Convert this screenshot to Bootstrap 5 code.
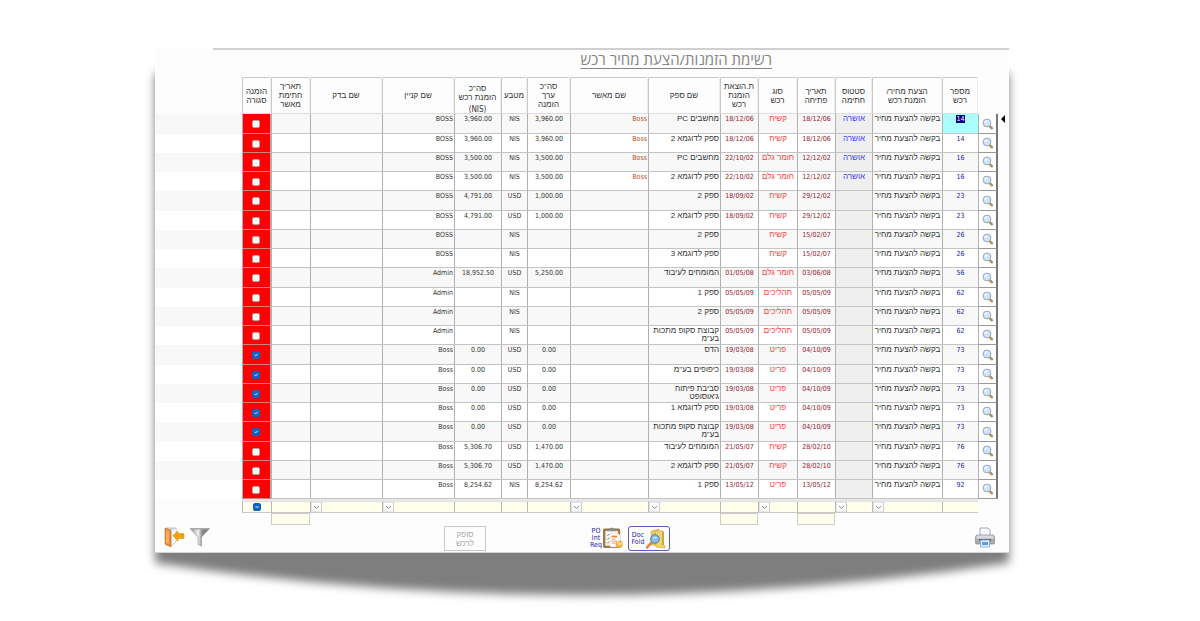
<!DOCTYPE html>
<html lang="he">
<head>
<meta charset="utf-8">
<meta name="viewport" content="width=device-width, initial-scale=1">
<title>רשימת הזמנות/הצעת מחיר רכש</title>
<link href="https://cdn.jsdelivr.net/npm/bootstrap@5.3.0/dist/css/bootstrap.min.css" rel="stylesheet">
<style>
body{background:#fff;font-family:"Liberation Sans",sans-serif;font-size:8px;line-height:8px;color:#333}
.sheet-wrap{padding:48px 191px 68px 155px;z-index:0}
.sheet{background:#fdfdfd;border-bottom:1px solid #d4d4d4}
.topline{height:2px;background:#d0d0d0;margin-left:58px}
.shade{top:61px;left:135px;width:calc(100% - 306px);height:560px;z-index:-1}
.titlebar{height:27px;padding-right:237px}
.title{font-family:"Open Sans",sans-serif;font-size:15px;line-height:18px;color:#858585;text-decoration:underline;text-decoration-thickness:1px;text-underline-offset:3px}
.latin{font-family:"DejaVu Sans Condensed","DejaVu Sans",sans-serif;font-size:7px}
.orders{table-layout:fixed;width:100%;border-collapse:separate;border-spacing:0}
.orders th{height:37px;padding:0;font-weight:400;text-align:center;vertical-align:middle;line-height:9px;border:1px solid #c8c8c8;border-right-color:#eee;border-bottom-color:#ddd;border-radius:2px 2px 0 0}
.orders th.sum{vertical-align:bottom}
.sum span{display:block;font-size:8px;line-height:11px;padding-top:2px;height:11px}
.orders th.void,.orders td.void{border:0 !important}
.orders tbody td{height:19px;padding:1px 1px 0;vertical-align:top;text-align:center;border-left:1px solid #b0b0b0;border-bottom:1px solid #c4c4c4}
.orders tbody tr:nth-child(4n+1) td{height:20px}
.orders tbody tr:nth-child(odd){background:#f8f8f8}
.orders tbody tr:nth-child(even){background:#fff}
.orders tbody td.edge{background:#fdfdfd;text-align:right;padding-right:4px}
.orders tbody td.name{text-align:right}
.orders tbody td.status{background:#efefef;color:#3b3bff}
.orders tbody td.kind{color:#ff3b3b}
.orders tbody td.date{color:#8f1a2c}
.orders tbody td.num{color:#1c1c98}
.orders tbody tr.current td.num{background:#aff}
.current .num span{background:#000080;color:#fff}
.orders tbody td.approver{color:#b0501f;text-align:right}
.orders tbody td.buyer{text-align:right}
.orders tbody td.closed{background:#f00;border-right:1px solid #b0b0b0;border-bottom-color:#d08080;vertical-align:middle;padding-right:2px}
.orders tbody td.lens{background:#fff;border-right:2px solid #777;border-bottom-color:#999;padding:0;vertical-align:middle}
.lens button{width:16px;height:14px}
.tick{width:8px;height:8px;min-height:0;border:1px solid #b4a4a4;border-radius:2px;background-color:#f6f6f6}
.form-check-input.tick:checked,.form-check-input.tick:indeterminate{background-color:#0b64c0;border-color:#0b64c0}
.orders tfoot td{height:12px;padding:0;border-left:1px solid #b8b8b8;border-bottom:1px solid #c8c8c8;border-top:1px solid #e0e0e0;background:#ffffec}
.orders tfoot .spacer td{height:2px;border:0;background:#e8e8e8}
.orders tfoot .spacer td.void,.orders tfoot td.void{background:transparent}
.orders tfoot .second td.box{border:1px solid #ccc}
.filter{display:block;width:100%;height:10px;border:0;border-radius:0;background-color:transparent;padding:0;appearance:none;font-size:8px;line-height:8px}
select.filter{background:url("data:image/svg+xml,%3Csvg xmlns='http://www.w3.org/2000/svg' width='11' height='10'%3E%3Cpath d='M0 0h10.500v10H0z' fill='%23fff' stroke='%23ccc'/%3E%3Cpath d='M3 4l2.500 2.500L8 4' fill='none' stroke='%23888'/%3E%3C/svg%3E") left center no-repeat}
.tools{height:27px;padding:1px 14px 0 9px}
.tool{border:0;background:none;padding:0}
.supplied{width:42px;height:25px;margin-left:233px;border:1px solid #c8c8c8;color:#a8a8a8;font-size:8px;line-height:9px}
.po{margin-left:104px;gap:1px}
.po,.doc{color:#1c1c98}
.latin.po,.latin.doc{line-height:7px;text-align:center}
.doc{width:42px;height:25px;margin-left:4px;gap:2px;border:1px solid #5a5ab8;border-radius:3px}
</style>
</head>
<body>
<div class="sheet-wrap position-relative">
<svg class="shade position-absolute" viewBox="0 0 894 560" preserveAspectRatio="none" aria-hidden="true"><defs><filter id="soft" filterUnits="userSpaceOnUse" x="0" y="0" width="894" height="560"><feGaussianBlur stdDeviation="5"/></filter></defs><path d="M20 12H874V502Q447 566 20 502Z" fill="#7e7e7e" filter="url(#soft)"/></svg>
<main class="sheet">
<div class="topline"></div>
<div class="titlebar text-end"><h1 class="title m-0" dir="rtl">רשימת הזמנות/הצעת מחיר רכש</h1></div>
<table class="orders" dir="rtl">
<colgroup id="cols"></colgroup>
<thead><tr>
<th class="void"></th><th class="void"></th><th>מספר<br>רכש</th><th>הצעת מחיר/<br>הזמנת רכש</th><th>סטטוס<br>חתימה</th><th>תאריך<br>פתיחה</th><th>סוג<br>רכש</th><th>ת.הוצאת<br>הזמנת<br>רכש</th><th>שם ספק</th><th>שם מאשר</th><th>סה"כ<br>ערך<br>הזמנה</th><th>מטבע</th><th class="sum">סה"כ<br>הזמנת רכש<span class="latin">(NIS)</span></th><th>שם קניין</th><th>שם בדק</th><th>תאריך<br>חתימת<br>מאשר</th><th>הזמנה<br>סגורה</th><th class="void"></th>
</tr></thead>
<tbody id="rows"></tbody>
<tfoot id="filters"></tfoot>
</table>
<div class="tools d-flex align-items-start">
<button class="tool" aria-label="יציאה"><svg width="21" height="22" viewBox="0 0 21 22"><path d="M2 2h10v14l-4 3H2z" fill="#d9d9d9" stroke="#aaa" stroke-width=".6"/><path d="M7 4l5-2v14l-5 4z" fill="#f4f4f4" stroke="#bbb" stroke-width=".5"/><path d="M1 2l6 2.500V21l-6-3z" fill="#e58a35" stroke="#bd6c24" stroke-width=".6"/><path d="M2 4l3 1v13l-3-1z" fill="#f4ab62"/><path d="M9 9.500l5-4.500v2.500h6v5h-6V15z" fill="#f2a100" stroke="#d88c00" stroke-width=".5"/></svg></button>
<button class="tool ms-1" aria-label="סינון"><svg width="22" height="22" viewBox="0 0 22 22"><defs><linearGradient id="fg"><stop offset="0" stop-color="#8a8a8a"/><stop offset=".42" stop-color="#f2f2f2"/><stop offset=".62" stop-color="#8c8c8c"/><stop offset="1" stop-color="#6c6c6c"/></linearGradient></defs><path d="M1 2.500h19.500L12.500 11V20L9 18.500V11z" fill="url(#fg)" stroke="#8a8a8a" stroke-width=".6"/><path d="M1.500 2h18.500l-1.500 1.500h-15z" fill="#aaa"/></svg></button>
<button class="tool supplied" disabled dir="rtl">סופק<br>לרכש</button>
<button class="tool po latin d-flex align-items-center"><span>PO<br>Int<br>Req</span><svg width="21" height="24" viewBox="0 0 22 25"><rect x=".5" y="3" width="17" height="19.500" rx="1" fill="#a9773c" stroke="#7c5223" stroke-width=".7"/><path d="M2.500 5h13v15.500h-13z" fill="#fafafa"/><path d="M4 5.500l1-3h2.500q1.500-2 3 0H13l1 3z" fill="#8b8b84"/><path d="M4 9l1 1 1.500-2M4 13l1 1 1.500-2M4 17l1 1 1.500-2" fill="none" stroke="#555" stroke-width=".7"/><path d="M7.500 7.500h8l3 3V22h-11z" fill="#fff" stroke="#c6c6c6" stroke-width=".5"/><path d="M9 10h6v2H9z" fill="#ef8a35"/><path d="M9 14h4M9 16h6M9 18h4" stroke="#e9a46a"/><circle cx="17" cy="19" r="3.800" fill="#f5a834"/><path d="M14 17l2.500-2 1 2.500 3.500-1-1 3-4 1z" fill="#fbd69a"/></svg></button>
<button class="tool doc latin d-flex align-items-center justify-content-center"><span>Doc<br>Fold</span><svg width="20" height="22" viewBox="0 0 20 22"><path d="M5 3l8-2 1 17-9-1z" fill="#e9c559" stroke="#caa43c" stroke-width=".5"/><path d="M9 3h8v14l2 1v2l-9-1z" fill="#f0d474" stroke="#c9a237" stroke-width=".6"/><path d="M16 3l2 1v13h-2z" fill="#cda742"/><path d="M6 14l-5 5.500" stroke="#ee7b2e" stroke-width="2.500" stroke-linecap="round"/><circle cx="9" cy="11" r="4.300" fill="#83bfeb" stroke="#4d7fae"/><path d="M6.500 10.500q2.500-3.500 5 0z" fill="#d4ecfc"/></svg></button>
<button class="tool ms-auto" aria-label="הדפסה"><svg width="20" height="22" viewBox="0 0 20 22"><path d="M5 10V2h8l2 2v6z" fill="#f3f7fb" stroke="#8c98a4" stroke-width=".8"/><path d="M1.500 9h17l1 2v6q0 1-1 1h-17q-1 0-1-1v-6z" fill="#a9adb1" stroke="#777c80" stroke-width=".6"/><path d="M2 9.500h16l1 3H1z" fill="#dadde0"/><path d="M4 13h12v2H4z" fill="#666"/><path d="M5.500 14h9v7h-9z" fill="#dcecfb" stroke="#6ba0d4" stroke-width=".7"/><path d="M7 16h6v3H7z" fill="#5fa0e0"/></svg></button>
</div>
</main>
</div>
<script src="https://cdn.jsdelivr.net/npm/bootstrap@5.3.0/dist/js/bootstrap.bundle.min.js"></script>
<script>
// Column widths from right to left; the last column takes the remaining space.
const widths = [11, 20, 36, 70, 37, 38, 39, 38, 72, 78, 43, 26, 47, 72, 72, 39, 29];
document.getElementById('cols').innerHTML = widths.map(w => `<col width="${w}">`).join('') + '<col>';

// number | signed | opened | kind | issued | supplier | approver | value | currency | total | buyer | closed
const orders = `14|1|18/12/06|קשיח|18/12/06|מחשבים PC|Boss|3,960.00|NIS|3,960.00|BOSS|
14|1|18/12/06|קשיח|18/12/06|ספק לדוגמא 2|Boss|3,960.00|NIS|3,960.00|BOSS|
16|1|12/12/02|חומר גלם|22/10/02|מחשבים PC|Boss|3,500.00|NIS|3,500.00|BOSS|
16|1|12/12/02|חומר גלם|22/10/02|ספק לדוגמא 2|Boss|3,500.00|NIS|3,500.00|BOSS|
23||29/12/02|קשיח|18/09/02|ספק 2||1,000.00|USD|4,791.00|BOSS|
23||29/12/02|קשיח|18/09/02|ספק לדוגמא 2||1,000.00|USD|4,791.00|BOSS|
26||15/02/07|קשיח||ספק 2|||NIS||BOSS|
26||15/02/07|קשיח||ספק לדוגמא 3|||NIS||BOSS|
56||03/06/08|חומר גלם|01/05/08|המומחים לעיבוד||5,250.00|USD|18,952.50|Admin|
62||05/05/09|תהליכים|05/05/09|ספק 1|||NIS||Admin|
62||05/05/09|תהליכים|05/05/09|ספק 2|||NIS||Admin|
62||05/05/09|תהליכים|05/05/09|קבוצת סקופ מתכות בע"מ|||NIS||Admin|
73||04/10/09|פריט|19/03/08|הדס||0.00|USD|0.00|Boss|1
73||04/10/09|פריט|19/03/08|כיפופים בע"מ||0.00|USD|0.00|Boss|1
73||04/10/09|פריט|19/03/08|סביבת פיתוח ג'אוסופט||0.00|USD|0.00|Boss|1
73||04/10/09|פריט|19/03/08|ספק לדוגמא 1||0.00|USD|0.00|Boss|1
73||04/10/09|פריט|19/03/08|קבוצת סקופ מתכות בע"מ||0.00|USD|0.00|Boss|1
76||28/02/10|קשיח|21/05/07|המומחים לעיבוד||1,470.00|USD|5,306.70|Boss|
76||28/02/10|קשיח|21/05/07|ספק לדוגמא 2||1,470.00|USD|5,306.70|Boss|
92||13/05/12|פריט|13/05/12|ספק 1||8,254.62|NIS|8,254.62|Boss|`;
const lens = '<svg width="12" height="12" viewBox="0 0 12 12"><path d="M7.500 8l2.500 2.300" stroke="#b09048" stroke-width="2.400" stroke-linecap="round"/><circle cx="5" cy="5" r="3.900" fill="#cfe3fa" stroke="#9aa6bb"/><path d="M3 5q.3-2 2.300-2.300" stroke="#fff" stroke-width="1.300" fill="none"/></svg>';
const marker = '<svg width="4" height="8" viewBox="0 0 4 8"><path d="M4 0v8L0 4z" fill="#000"/></svg>';
document.getElementById('rows').innerHTML = orders.split('\n').map((line, i) => {
  const [num, signed, opened, kind, issued, supplier, approver, value, cur, total, buyer, closed] = line.split('|');
  return `<tr class="${i ? '' : 'current'}"><td class="void edge">${i ? '' : marker}</td>
<td class="lens"><button class="tool" aria-label="פתיחת הזמנה ${num}">${lens}</button></td>
<td class="num latin"><span>${num}</span></td><td class="text-nowrap">בקשה להצעת מחיר</td><td class="status">${signed ? 'אושרה' : ''}</td>
<td class="date latin">${opened}</td><td class="kind text-nowrap">${kind}</td><td class="date latin">${issued}</td><td class="name">${supplier}</td>
<td class="approver latin">${approver}</td><td class="latin">${value}</td><td class="latin">${cur}</td><td class="latin">${total}</td><td class="buyer latin">${buyer}</td>
<td></td><td></td><td class="closed"><input type="checkbox" class="form-check-input tick m-0" aria-label="הזמנה סגורה" ${closed ? 'checked' : ''}></td><td class="void"></td></tr>`;
}).join('');

const picks = [3, 4, 6, 8, 9, 13, 14], ranges = [5, 7, 15];
const each = f => widths.concat(0).map((w, i) => f(i, i < 2 || i === 17)).join('');
document.getElementById('filters').innerHTML =
  '<tr class="spacer">' + each((i, v) => `<td class="${v ? 'void' : ''}"></td>`) + '</tr><tr>' +
  each((i, v) => v ? '<td class="void"></td>' : i === 16 ? '<td class="text-center"><input type="checkbox" id="anyClosed" class="form-check-input tick m-0 d-inline-block align-top" aria-label="הזמנה סגורה"></td>' :
    picks.includes(i) ? '<td><select class="filter" aria-label="סינון"><option></option></select></td>' : '<td><input class="filter" aria-label="סינון"></td>') +
  '</tr><tr class="second">' + each(i => ranges.includes(i) ? '<td class="box"><input class="filter" aria-label="עד תאריך"></td>' : '<td class="void"></td>') + '</tr>';
document.getElementById('anyClosed').indeterminate = true;
</script>
</body>
</html>
